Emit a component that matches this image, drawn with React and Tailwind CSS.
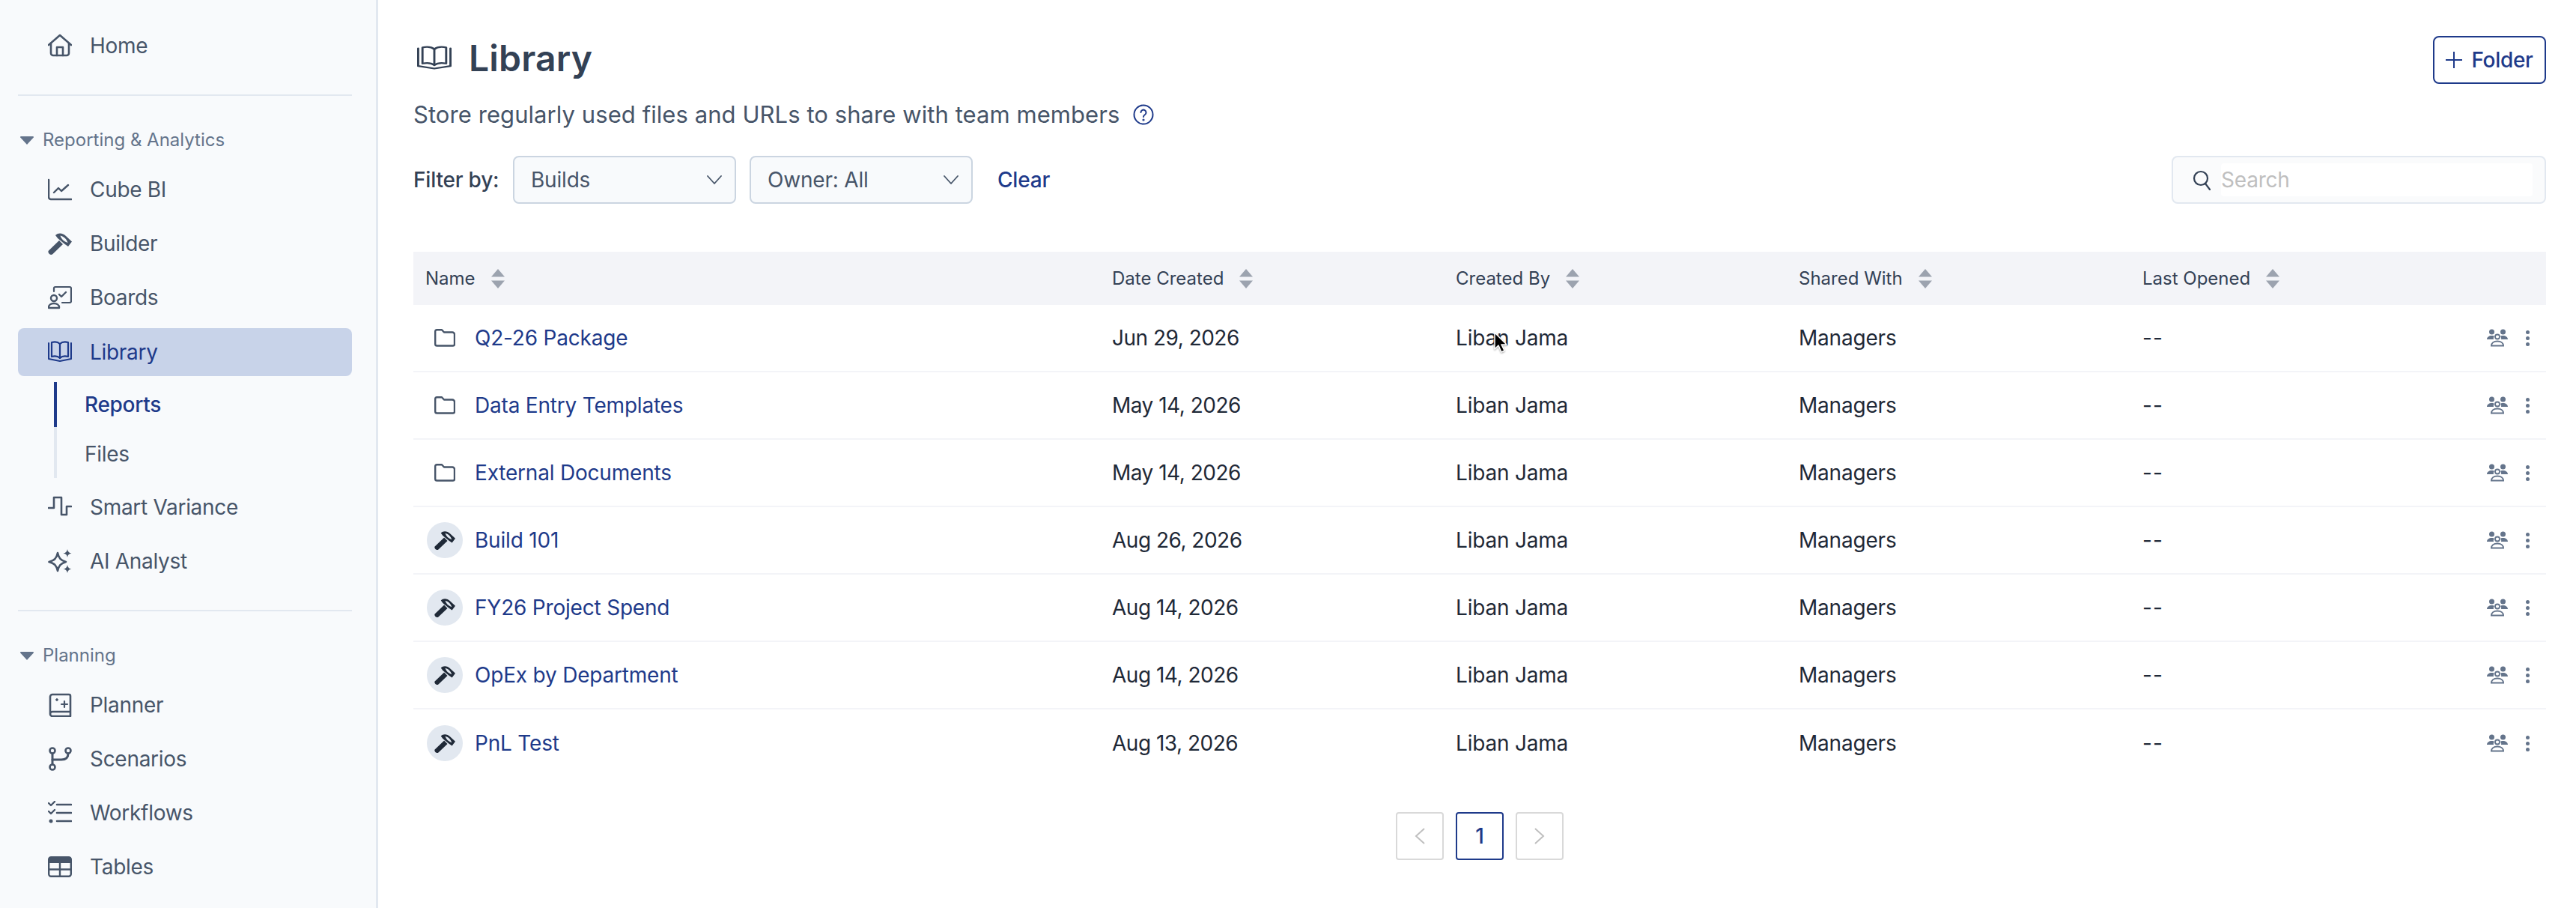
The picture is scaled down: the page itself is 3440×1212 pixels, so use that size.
import React from "react";

const S = ({ children, className = "w-8 h-8", vb = "0 0 32 32" }) => (
  <svg viewBox={vb} className={className} fill="none" stroke="currentColor" strokeWidth="2.600" strokeLinecap="round" strokeLinejoin="round">{children}</svg>
);
const HomeI = () => <S><path d="M1 15 16 2l15 13" /><path d="M4 13v13a3 3 0 0 0 3 3h18a3 3 0 0 0 3-3V13" /><path d="M12 29V18h8v11" /></S>;
const ChartI = () => <S><path d="M1 3v23a3 3 0 0 0 3 3h27" /><path d="M8 20l6-6 4 4 9-8" strokeWidth="2.400" /></S>;
const HammerI = ({ className = "w-8 h-8" }) => (
  <svg viewBox="0 0 32 32" className={className} fill="currentColor">
    <path d="M1 25.500 15 12l5 5L6.500 30c-1.500 1.500-3.500 1-4.500 0s-2.500-3-1-4.500z" />
    <path fillRule="evenodd" d="M10 5C14 1 20 2 24 6l8 7.500-5 6.500-5-3.500L13 9zM16.500 5.500C21 6.500 25 10 26.500 15 21.500 13.500 18 10 16.500 5.500z" />
  </svg>
);
const BoardsI = () => <S><path d="M8 8V4a2 2 0 0 1 2-2h19a2 2 0 0 1 2 2v17a2 2 0 0 1-2 2H19" strokeWidth="2.200" /><path d="M15 12l3 3 6-6" strokeWidth="2.400" /><circle cx="8" cy="17" r="4" strokeWidth="2.400" /><path d="M1 30v-1c0-3 3-5 7-5s7 2 7 5v1z" strokeWidth="2.400" /></S>;
const BookI = ({ className = "w-8 h-8", sw = 2.200 }) => (
  <svg viewBox="0 0 32 32" preserveAspectRatio="none" className={className} fill="none" stroke="currentColor" strokeWidth={sw} strokeLinejoin="round" strokeLinecap="round">
    <path d="M1 4v21l15 3 15-3V4" /><path d="M5 3c4-1 8-1 11 2 3-3 7-3 11-2v19c-4-1-8-1-11 2-3-3-7-3-11-2z" /><path d="M16 5v19" />
  </svg>
);
const VarI = () => <S><path d="M1 17h7V3h10v23h7V15h6" /></S>;
const SparkI = () => (
  <svg viewBox="0 0 32 32" className="w-8 h-8" fill="currentColor">
    <path d="M13 5c1.500 7 4 10 11 12-7 2-9.500 5-11 12-1.500-7-4-10-11.500-12C9 15 11.500 12 13 5z" fill="none" stroke="currentColor" strokeWidth="2.600" strokeLinejoin="round" />
    <path d="M26 0c.6 3.200 2 5 5.500 5.500-3.500.6-4.900 2.300-5.500 5.500-.6-3.200-2-4.900-5.500-5.500C24 5 25.400 3.200 26 0zM26 21c.6 3.200 2 5 5.500 5.500-3.500.6-4.900 2.300-5.500 5.500-.6-3.200-2-4.900-5.500-5.500 3.500-.5 4.900-2.300 5.500-5.500z" />
  </svg>
);
const PlannerI = () => <S><path d="M30 25H6a3 3 0 0 0 0 6h24V4a2 2 0 0 0-2-2H6a3 3 0 0 0-3 3v23" /><path d="M22 11v8M18 15h8" strokeWidth="2.200" /><path d="M12 8v2M11 9h2" strokeWidth="2" /></S>;
const BranchI = () => <S><circle cx="6" cy="5" r="3.500" /><circle cx="6" cy="27" r="3.500" /><circle cx="27" cy="5" r="3.500" /><path d="M6 9v14" strokeWidth="3" /><path d="M27 9c0 6-4 8-9 8H6" strokeWidth="3" /></S>;
const ChecksI = () => <S><path d="M12 5h19M12 16h19M12 27h19" /><path d="M1 3l3 3 5-5M1 14l3 3 5-5" strokeWidth="2.400" /><circle cx="4" cy="27" r="1.200" fill="currentColor" /></S>;
const TableI = () => (
  <svg viewBox="0 0 32 28" className="w-8 h-7" fill="none">
    <rect x="1.200" y="1.200" width="29.600" height="25.600" rx="3" stroke="currentColor" strokeWidth="2.400" />
    <path d="M1 3a2 2 0 0 1 2-2h26a2 2 0 0 1 2 2v6H1z" fill="currentColor" />
    <path d="M16 8v19M1 17.500h30" stroke="currentColor" strokeWidth="2.400" />
  </svg>
);
const FolderI = () => (
  <svg viewBox="0 0 28 24" className="w-7 h-6" fill="none" stroke="currentColor" strokeWidth="2.400" strokeLinejoin="round">
    <path d="M1.200 3.500a2.300 2.300 0 0 1 2.300-2.300h6.500l3 3.300h11a3 3 0 0 1 3 3v13a2 2 0 0 1-2 2H3.500a2.300 2.300 0 0 1-2.300-2.300z" />
  </svg>
);
const PeopleI = () => (
  <svg viewBox="0 0 28 24" className="w-7 h-6" fill="#64748b">
    <circle cx="6.500" cy="4" r="3.500" /><circle cx="21.500" cy="4" r="3.500" />
    <path d="M0 14c0-3 3-5 6.500-5 2 0 3 .5 3.500 1-1 1-1.500 2-1 4zM28 14c0-3-3-5-6.500-5-2 0-3 .5-3.500 1 1 1 1.500 2 1 4z" />
    <circle cx="14" cy="10.500" r="3" fill="none" stroke="#64748b" strokeWidth="1.800" />
    <path d="M6 22.500c0-3.500 3-6 8-6s8 2.500 8 6z" fill="none" stroke="#64748b" strokeWidth="2" />
  </svg>
);
const Sort = () => (
  <svg viewBox="0 0 18 26" className="w-[18px] h-[26px]" fill="#9ca3af">
    <path d="M9 0l9 10.500H0zM0 15.500h18L9 26z" strokeLinejoin="round" />
  </svg>
);
const Caret = () => (
  <svg viewBox="0 0 18 11" className="w-[18px] h-[11px] ml-[3px] mr-[9px]" fill="#64748b"><path d="M1 0h16a1 1 0 0 1 .8 1.600L9 11 .2 1.600A1 1 0 0 1 1 0z" /></svg>
);
const Chevron = () => (
  <svg viewBox="0 0 20 12" className="w-5 h-3" fill="none" stroke="#475569" strokeWidth="1.800" strokeLinecap="round" strokeLinejoin="round"><path d="M1 1l9 10 9-10" /></svg>
);

const NavRow = ({ icon, label }) => (
  <div className="flex items-center h-[72px] pl-16 text-[#475569]">
    <span className="w-8 h-8 flex items-center justify-center shrink-0">{icon}</span>
    <span className="ml-[24px] text-[28px] tracking-[-0.3px]">{label}</span>
  </div>
);
const Group = ({ label }) => (
  <div className="flex items-center h-[30px] text-[#64748b]">
    <Caret />
    <span className="ml-[3px] text-[24px]">{label}</span>
  </div>
);

const rows = [
  ["Q2-26 Package", "Jun 29, 2026", "f"],
  ["Data Entry Templates", "May 14, 2026", "f"],
  ["External Documents", "May 14, 2026", "f"],
  ["Build 101", "Aug 26, 2026", "b"],
  ["FY26 Project Spend", "Aug 14, 2026", "b"],
  ["OpEx by Department", "Aug 14, 2026", "b"],
  ["PnL Test", "Aug 13, 2026", "b"],
];
const heads = ["Name", "Date Created", "Created By", "Shared With", "Last Opened"];
const cols = "grid grid-cols-[917px_459px_458px_459px_1fr] items-center px-4";

const Select = ({ label }) => (
  <div className="w-[298px] h-16 flex items-center justify-between pl-[22px] pr-[17px] bg-[#f8fafc] border-2 border-[#cbd5e1] rounded-lg text-[28px] tracking-[-0.2px] text-[#475569]">
    <span>{label}</span>
    <Chevron />
  </div>
);

export default function App() {
  return (
    <div className="relative flex w-[3440px] h-[1212px] overflow-hidden bg-white font-[Inter,sans-serif]">
      <aside className="w-[505px] shrink-0 h-full bg-[#f8fafc] border-r-[3px] border-[#e2e8f0] pt-[25px] px-6">
        <div className="-ml-6"><NavRow icon={<HomeI />} label="Home" /></div>
        <div className="mt-[29px] w-[446px] h-[2px] bg-[#e2e8f0]" />
        <div className="mt-[44px]"><Group label="Reporting & Analytics" /></div>
        <div className="-ml-6 mt-[15px]">
          <NavRow icon={<ChartI />} label="Cube BI" />
          <NavRow icon={<HammerI />} label="Builder" />
          <NavRow icon={<BoardsI />} label="Boards" />
        </div>
        <div className="mt-[5px] w-[446px] h-16 flex items-center pl-10 bg-[#c8d3e9] rounded-lg text-[#1e3a8a]">
          <BookI />
          <span className="ml-[24px] text-[28px] tracking-[-0.3px]">Library</span>
        </div>
        <div className="mt-2 ml-12 text-[28px] tracking-[-0.3px]">
          <div className="h-[60px] flex items-center border-l-4 border-[#1e3a8a] pl-[37px] font-medium text-[#1e3a8a]">Reports</div>
          <div className="h-[68px] flex items-center border-l-4 border-[#e2e8f0] pl-[37px] pt-[4px] text-[#475569]">Files</div>
        </div>
        <div className="-ml-6 mt-[3px]">
          <NavRow icon={<VarI />} label="Smart Variance" />
          <NavRow icon={<SparkI />} label="AI Analyst" />
        </div>
        <div className="mt-[29px] w-[446px] h-[2px] bg-[#e2e8f0]" />
        <div className="mt-[44px]"><Group label="Planning" /></div>
        <div className="-ml-6 mt-[15px]">
          <NavRow icon={<PlannerI />} label="Planner" />
          <NavRow icon={<BranchI />} label="Scenarios" />
          <NavRow icon={<ChecksI />} label="Workflows" />
          <NavRow icon={<TableI />} label="Tables" />
        </div>
      </aside>

      <main className="flex-1 pl-[47px] pr-10 pt-12">
        <div className="flex items-start justify-between h-16">
          <div className="flex items-center h-[60px] pl-[5px] text-[#334155]">
            <BookI className="w-[46px] h-[36px]" sw="2" />
            <h1 className="ml-[23px] text-[48px] font-semibold tracking-[0.2px]">Library</h1>
          </div>
          <button className="w-[151px] h-16 flex items-center justify-center gap-3 border-2 border-[#1e3a8a] rounded-lg text-[#1e3a8a] text-[28px] font-medium tracking-[-0.3px]">
            <svg viewBox="0 0 22 22" className="w-[22px] h-[22px]" fill="none" stroke="currentColor" strokeWidth="2"><path d="M11 0v22M0 11h22" /></svg>
            Folder
          </button>
        </div>
        <div className="flex items-center mt-[16px] h-[50px] text-[31px] tracking-[0.07px] text-[#475569]">
          <span>Store regularly used files and URLs to share with team members</span>
          <svg viewBox="0 0 28 28" className="ml-[18px] w-7 h-7" fill="none" stroke="#1e3a8a" strokeWidth="2" strokeLinecap="round">
            <circle cx="14" cy="14" r="12.500" /><path d="M10.500 11a3.500 3.500 0 1 1 5.500 3c-1.300.8-2 1.500-2 3" /><circle cx="14" cy="21" r=".6" fill="#1e3a8a" />
          </svg>
        </div>
        <div className="flex items-center mt-[30px] h-16">
          <span className="w-[133px] text-[28px] font-medium tracking-[-0.2px] text-[#334155]">Filter by:</span>
          <Select label="Builds" />
          <div className="ml-[18px]"><Select label="Owner: All" /></div>
          <span className="ml-[33px] text-[28px] font-medium tracking-[-0.2px] text-[#1e3a8a]">Clear</span>
          <div className="ml-auto w-[500px] h-16 flex items-center pl-[26px] pr-[16px] py-[8px] bg-[#fafbfc] border-2 border-[#e2e8f0] rounded-lg">
            <svg viewBox="0 0 24 28" className="w-6 h-7 shrink-0" fill="none" stroke="#334155" strokeWidth="2.200" strokeLinecap="round"><circle cx="11" cy="12" r="9" /><path d="M17 19l6 8" /></svg>
            <div className="ml-[14px] flex-1 h-full flex items-center bg-white rounded text-[28px] tracking-[-0.2px] text-[#bfbfbf]">Search</div>
          </div>
        </div>
        <div className={`${cols} mt-[64px] h-[71px] bg-[#f3f4f8] text-[24px] text-[#334155]`}>
          {heads.map((h) => (
            <div key={h} className="flex items-center gap-[21px]"><span>{h}</span><Sort /></div>
          ))}
        </div>
        {rows.map(([name, date, kind], i) => (
          <div key={name} className={`${cols} h-[90px] text-[28px] tracking-[-0.2px] text-[#1f2937] ${i < rows.length - 1 ? "border-b-2 border-[#f3f4f8]" : ""}`}>
            <div className="flex items-center">
              <span className="w-[52px] flex items-center justify-center text-[#475569]">
                {kind === "f" ? <FolderI /> : (
                  <span className="w-12 h-12 rounded-full bg-[#e2e8f0] flex items-center justify-center text-[#1f2937]"><HammerI className="w-7 h-7" /></span>
                )}
              </span>
              <span className="ml-[14px] text-[#1e3a8a]">{name}</span>
            </div>
            <div className="tracking-[-0.5px]">{date}</div>
            <div>Liban Jama</div>
            <div>Managers</div>
            <div className="flex items-center">
              <span className="tracking-[1px]">--</span>
              <span className="ml-auto flex items-center">
                <PeopleI />
                <span className="ml-[24px] mr-[6px] w-[5px] flex flex-col gap-[3px] items-center">
                  <i className="w-[5px] h-[5px] rounded-full bg-[#64748b]" />
                  <i className="w-[5px] h-[5px] rounded-full bg-[#64748b]" />
                  <i className="w-[5px] h-[5px] rounded-full bg-[#64748b]" />
                </span>
              </span>
            </div>
          </div>
        ))}
        <div className="flex justify-center gap-4 mt-[47px]">
          <div className="w-16 h-16 flex items-center justify-center border-2 border-[#d9d9d9] rounded">
            <svg viewBox="0 0 14 22" className="w-[14px] h-[22px]" fill="none" stroke="#bfbfbf" strokeWidth="2"><path d="M13 1 2 11l11 10" /></svg>
          </div>
          <div className="w-16 h-16 flex items-center justify-center border-2 border-[#1e3a8a] rounded text-[28px] font-medium text-[#1e3a8a]">1</div>
          <div className="w-16 h-16 flex items-center justify-center border-2 border-[#d9d9d9] rounded">
            <svg viewBox="0 0 14 22" className="w-[14px] h-[22px]" fill="none" stroke="#bfbfbf" strokeWidth="2"><path d="M1 1l11 10L1 21" /></svg>
          </div>
        </div>
      </main>

      <svg viewBox="0 0 20 32" className="absolute left-[1994px] top-[442px] w-5 h-8" style={{ filter: "drop-shadow(0 1px 1px rgba(0,0,0,.35))" }}>
        <path d="M2 2v22l5-5 4 9 4-2-4-8h7z" fill="#000" stroke="#fff" strokeWidth="1.500" strokeLinejoin="round" />
      </svg>
    </div>
  );
}
